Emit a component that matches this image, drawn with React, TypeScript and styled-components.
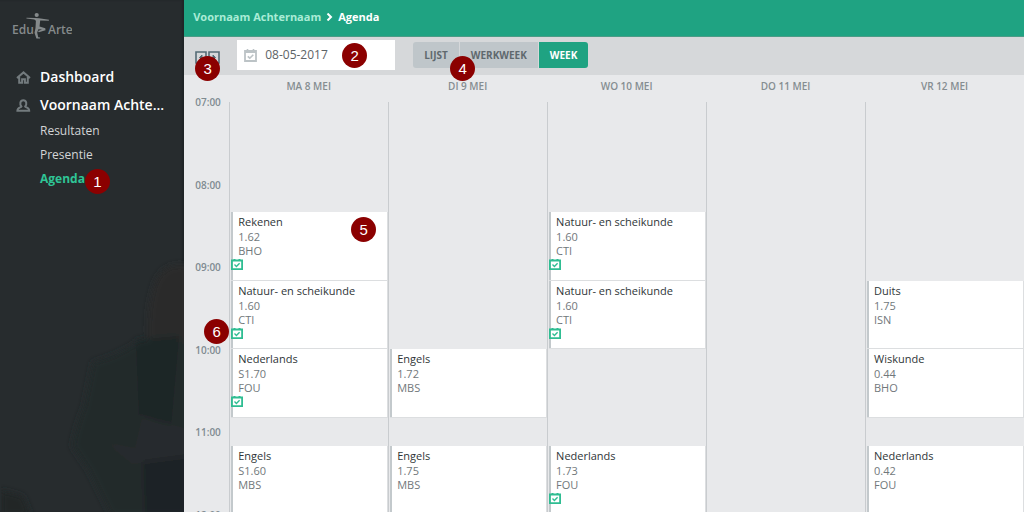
import React from 'react';
import styled, { createGlobalStyle } from 'styled-components';

const GlobalStyle = createGlobalStyle`
  * { box-sizing: border-box; }
  body {
    margin: 0;
    background: #e8e9eb;
    font-family: 'Open Sans', sans-serif;
    font-size: 12px;
    line-height: 14px;
    color: #3a4144;
  }
  button, input { font: inherit; }
`;

const Shell = styled.div`
  display: flex;
  height: 100vh;
  overflow: hidden;
`;

const Sidebar = styled.aside`
  position: relative;
  flex: 0 0 183px;
  background: #272c2e;
  box-shadow: inset -2px 0 2px #1f2426;
`;

const Backdrop = styled.svg`
  position: absolute;
  right: 0;
  bottom: 0;
  width: 183px;
  height: 312px;
`;

const Logo = styled.a`
  position: relative;
  display: block;
  height: 63px;
  padding: 12px 12px 0;
`;

const Nav = styled.nav`
  position: relative;
  display: flex;
  flex-direction: column;
`;

const MainLink = styled.a`
  display: flex;
  align-items: center;
  gap: 9px;
  height: 28px;
  padding: 0 20px 0 16px;
  color: #fff;
  font-size: 14px;
  font-weight: 600;
  line-height: 20px;
  text-decoration: none;
  white-space: nowrap;
  svg { flex: none; }
`;

const SubList = styled.ul`
  margin: 0;
  padding: 0 0 0 40px;
  list-style: none;
`;

const SubItem = styled.li`
  display: flex;
  align-items: center;
  height: 24px;
`;

const SubLink = styled.a<{ $active?: boolean }>`
  position: relative;
  color: ${(p) => (p.$active ? '#2fc596' : '#d3d5d6')};
  font-weight: ${(p) => (p.$active ? 700 : 400)};
  line-height: 20px;
  text-decoration: none;
`;

const Marker = styled.span<{ $left: number; $top: number }>`
  position: absolute;
  z-index: 2;
  left: ${(p) => p.$left}px;
  top: ${(p) => p.$top}px;
  width: 25px;
  height: 25px;
  border-radius: 50%;
  background: #8b0000;
  color: #fff;
  font: 400 15px/25px 'Liberation Sans', sans-serif;
  text-align: center;
`;

const Main = styled.main`
  flex: 1;
  min-width: 0;
  display: flex;
  flex-direction: column;
`;

const Breadcrumb = styled.header`
  display: flex;
  align-items: center;
  gap: 5px;
  flex: 0 0 37px;
  padding: 0 9px 3px;
  border-bottom: 1px solid #4b9c86;
  background: #1fa382;
  color: #fff;
  font-size: 11px;
  font-weight: 700;
  a { color: #a9ecd6; text-decoration: none; }
`;

const Toolbar = styled.div`
  display: flex;
  align-items: center;
  flex: 0 0 38px;
  padding: 0 11px 2px;
  background: #d6d8da;
`;

const Steps = styled.div`
  position: relative;
  display: flex;
  gap: 1px;
  width: 42px;
  padding-top: 4px;
`;

const StepButton = styled.button`
  display: flex;
  padding: 0;
  border: 0;
  background: none;
`;

const DateField = styled.label`
  position: relative;
  display: flex;
  align-items: center;
  gap: 8px;
  width: 158px;
  height: 30px;
  padding: 0 7px;
  background: #fff;
  svg { flex: none; }
  input {
    width: 80px;
    padding: 0;
    border: 0;
    outline: 0;
    background: none;
    color: #5d6366;
    line-height: 20px;
  }
`;

const ViewSwitch = styled.div`
  position: relative;
  display: flex;
  gap: 1px;
  margin-left: 18px;
`;

const ViewButton = styled.button<{ $active?: boolean }>`
  height: 26px;
  padding: 0 11px;
  border: 0;
  background: ${(p) => (p.$active ? '#1fa382' : '#bfc6ca')};
  color: ${(p) => (p.$active ? '#fff' : '#5f696e')};
  font-size: 10px;
  font-weight: 700;
  &:first-of-type { border-radius: 3px 0 0 3px; }
  &:last-of-type { border-radius: 0 3px 3px 0; }
`;

const DayHeads = styled.div`
  display: flex;
  flex: none;
  height: 27px;
  padding: 1px 0 0 45px;
`;

const DayHead = styled.h2`
  flex: 1;
  margin: 0;
  color: #858d91;
  font-size: 10px;
  font-weight: 600;
  line-height: 20px;
  text-align: center;
`;

const Schedule = styled.div`
  display: flex;
  flex: 1;
  min-height: 0;
`;

const Hours = styled.div`
  display: grid;
  grid-template-rows: 83px 82px 83px 82px 83px 82px;
  flex: 0 0 45px;
  margin-top: -7px;
  padding-left: 11px;
  color: #7f8b91;
  font-size: 10px;
  font-weight: 600;
`;

const Day = styled.div`
  display: grid;
  grid-template-rows: 110px 69px 68px 69px 28px 69px;
  flex: 1;
  min-width: 0;
  border-left: 1px solid #c9cccf;
`;

const Lesson = styled.article<{ $row: number }>`
  position: relative;
  grid-row: ${(p) => p.$row};
  margin-left: 1px;
  padding: 2px 0 0 7px;
  border: 0 solid #dcdee0;
  border-width: 0 1px 1px 0;
  background: #fff;
  box-shadow: inset 2px 0 0 #c3c9cc;
  color: #71787b;
  font-size: 11px;
`;

const Subject = styled.h3`
  margin: 0 0 1px;
  color: #2f3638;
  font-size: 11px;
  font-weight: 400;
  line-height: 15px;
`;

const Line = styled.div``;

const Tick = styled.svg`
  position: absolute;
  left: 0;
  top: 47px;
`;

const CalendarIcon = ({ color }: { color: string }) => (
  <svg width="13" height="13" viewBox="0 0 13 13" fill="none" stroke={color} aria-hidden="true">
    <path d="M1 2h11v10H1z" strokeWidth="1.8" />
    <path d="M1 3h11" strokeWidth="2" />
    <path d="M3.500 0v3M9.500 0v3" strokeWidth="1.600" />
    <path d="M3.800 7.300l2 1.900 3.500-3.500" strokeWidth="1.600" />
  </svg>
);

const LessonTick = () => (
  <Tick width="12" height="11" viewBox="0 0 12 11" fill="none" stroke="#2fbd92" aria-hidden="true">
    <path d="M.9 1.500h10.200v8.600H.9z" strokeWidth="1.800" />
    <path d="M2.500.5h2M7.500.5h2" strokeWidth="1" />
    <path d="M3.500 5.600l1.900 1.800 3.200-3.200" strokeWidth="1.400" />
  </Tick>
);

const StepIcon = ({ next }: { next?: boolean }) => (
  <svg width="12" height="13" viewBox="0 0 12 13" fill="none" stroke="#566c76" aria-hidden="true">
    <path d="M1 1h10v11H1z" strokeWidth="1.600" />
    <path d={next ? 'M5 4l2.500 2.500L5 9z' : 'M7 4L4.500 6.500 7 9z'} fill="#566c76" strokeWidth="1" />
  </svg>
);

const LogoArt = () => (
  <svg width="60" height="28" viewBox="0 0 60 28" role="img" aria-label="Edu Arte">
    <g fill="#858a8b" fontFamily="'Open Sans', sans-serif" fontSize="12" fontWeight="600">
      <text x="0" y="22">Edu</text>
      <text x="36" y="22">Arte</text>
      <circle cx="24.700" cy="3" r="2.100" />
      <path d="M14.500 5.800l8.500.2 4 .2 10 1.500-.2 1-8.600-.2-.7 6 5.800 1.700.2 2.100-6.700 1.900-.8-1.300 4-1.400-3.600-.3-1.200 3.300 1 4.700 2 .4-.2.900-3.600-.1-1.900-5.600 1-4.800.4-7.300-1.600-1.200-7.900-.9z" />
    </g>
  </svg>
);

type Entry = { row: number; subject: string; room: string; teacher: string; tick?: boolean; marker?: React.ReactNode };

const days: { name: string; lessons: Entry[] }[] = [
  {
    name: 'MA 8 MEI',
    lessons: [
      { row: 2, subject: 'Rekenen', room: '1.62', teacher: 'BHO', tick: true, marker: <Marker $left={120} $top={5}>5</Marker> },
      { row: 3, subject: 'Natuur- en scheikunde', room: '1.60', teacher: 'CTI', tick: true, marker: <Marker $left={-27} $top={38}>6</Marker> },
      { row: 4, subject: 'Nederlands', room: 'S1.70', teacher: 'FOU', tick: true },
      { row: 6, subject: 'Engels', room: 'S1.60', teacher: 'MBS' },
    ],
  },
  {
    name: 'DI 9 MEI',
    lessons: [
      { row: 4, subject: 'Engels', room: '1.72', teacher: 'MBS' },
      { row: 6, subject: 'Engels', room: '1.75', teacher: 'MBS' },
    ],
  },
  {
    name: 'WO 10 MEI',
    lessons: [
      { row: 2, subject: 'Natuur- en scheikunde', room: '1.60', teacher: 'CTI', tick: true },
      { row: 3, subject: 'Natuur- en scheikunde', room: '1.60', teacher: 'CTI', tick: true },
      { row: 6, subject: 'Nederlands', room: '1.73', teacher: 'FOU', tick: true },
    ],
  },
  { name: 'DO 11 MEI', lessons: [] },
  {
    name: 'VR 12 MEI',
    lessons: [
      { row: 3, subject: 'Duits', room: '1.75', teacher: 'ISN' },
      { row: 4, subject: 'Wiskunde', room: '0.44', teacher: 'BHO' },
      { row: 6, subject: 'Nederlands', room: '0.42', teacher: 'FOU' },
    ],
  },
];

const hours = ['07:00', '08:00', '09:00', '10:00', '11:00', '12:00'];

export default function App() {
  return (
    <>
      <GlobalStyle />
      <Shell>
        <Sidebar>
          <Backdrop viewBox="0 0 183 312" aria-hidden="true">
            <filter id="soft"><feGaussianBlur stdDeviation="3" /></filter>
            <g filter="url(#soft)">
              <path d="M154 82q10-22 34-16v84h-40q-4-40 6-68z" fill="#292a2b" />
              <path d="M92 162q24-6 44-20h52v174H110l-22-45-17-25q4-20 12-40z" fill="#24292b" />
              <path d="M135 140l43-4-8 90-32-12z" fill="#1e2526" />
              <path d="M141 217l47 12v30l-57 5-27-22 30 6z" fill="#272c2d" />
              <path d="M142 262l46-6v60h-44z" fill="#1f2426" />
              <path d="M0 290l22 6 8 20H0z" fill="#202628" />
            </g>
          </Backdrop>
          <Logo href="#home"><LogoArt /></Logo>
          <Nav>
            <MainLink href="#dashboard">
              <svg width="15" height="13" viewBox="0 0 15 13" fill="none" stroke="#737b7e" strokeWidth="2" aria-hidden="true">
                <path d="M1 7l6.500-5.600L14 7M3.200 6v5.800h2.900V8.300h2.800v3.500h2.900V6" />
              </svg>
              Dashboard
            </MainLink>
            <MainLink href="#persoon">
              <svg width="15" height="13" viewBox="0 0 15 13" fill="none" stroke="#737b7e" strokeWidth="2" aria-hidden="true">
                <path d="M5.400 7.500C3.500 5.300 4 1.200 7.300 1.200s3.800 4.100 1.900 6.300c.6 1.200 4 .8 4 4.300H1.400c0-3.500 3.400-3.100 4-4.300z" />
              </svg>
              Voornaam Achte...
            </MainLink>
            <SubList>
              <SubItem><SubLink href="#resultaten">Resultaten</SubLink></SubItem>
              <SubItem><SubLink href="#presentie">Presentie</SubLink></SubItem>
              <SubItem>
                <SubLink href="#agenda" $active>Agenda<Marker $left={45} $top={0}>1</Marker></SubLink>
              </SubItem>
            </SubList>
          </Nav>
        </Sidebar>
        <Main>
          <Breadcrumb>
            <a href="#persoon">Voornaam Achternaam</a>
            <svg width="7" height="8" viewBox="0 0 7 8" fill="none" stroke="#fff" strokeWidth="2" aria-hidden="true">
              <path d="M1.500.5L5 4 1.500 7.500" />
            </svg>
            <span>Agenda</span>
          </Breadcrumb>
          <Toolbar>
            <Steps>
              <StepButton aria-label="Vorige"><StepIcon /></StepButton>
              <StepButton aria-label="Volgende"><StepIcon next /></StepButton>
              <Marker $left={0} $top={9}>3</Marker>
            </Steps>
            <DateField>
              <CalendarIcon color="#bcc3c6" />
              <input aria-label="Datum" defaultValue="08-05-2017" />
              <Marker $left={105} $top={3}>2</Marker>
            </DateField>
            <ViewSwitch>
              <ViewButton>LIJST</ViewButton>
              <ViewButton>WERKWEEK</ViewButton>
              <ViewButton $active>WEEK</ViewButton>
              <Marker $left={37} $top={14}>4</Marker>
            </ViewSwitch>
          </Toolbar>
          <DayHeads>
            {days.map((d) => <DayHead key={d.name}>{d.name}</DayHead>)}
          </DayHeads>
          <Schedule>
            <Hours>{hours.map((h) => <span key={h}>{h}</span>)}</Hours>
            {days.map((d) => (
              <Day key={d.name}>
                {d.lessons.map((l) => (
                  <Lesson key={l.row} $row={l.row}>
                    <Subject>{l.subject}</Subject>
                    <Line>{l.room}</Line>
                    <Line>{l.teacher}</Line>
                    {l.tick && <LessonTick />}
                    {l.marker}
                  </Lesson>
                ))}
              </Day>
            ))}
          </Schedule>
        </Main>
      </Shell>
    </>
  );
}
